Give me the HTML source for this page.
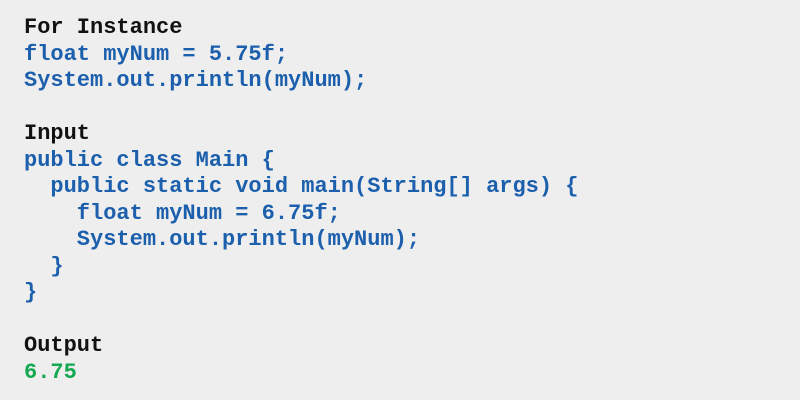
<!DOCTYPE html>
<html><head><style>
html,body{margin:0;padding:0;background:#eeeeee;width:800px;height:400px;overflow:hidden}
pre{margin:0;position:absolute;left:24px;top:15px;font-family:"Liberation Mono",monospace;font-weight:bold;font-size:22px;line-height:26.5px;color:#1c5fac}
.k{color:#111}
.g{color:#14a850}
</style></head><body>
<pre><span class="k">For Instance</span>
float myNum = 5.75f;
System.out.println(myNum);

<span class="k">Input</span>
public class Main {
  public static void main(String[] args) {
    float myNum = 6.75f;
    System.out.println(myNum);
  }
}

<span class="k">Output</span>
<span class="g">6.75</span></pre>
</body></html>
